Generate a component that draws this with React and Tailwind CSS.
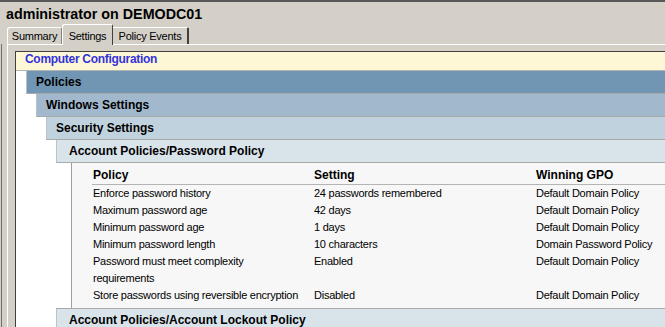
import React from "react";

const rows = [
  ["Enforce password history", "24 passwords remembered", "Default Domain Policy"],
  ["Maximum password age", "42 days", "Default Domain Policy"],
  ["Minimum password age", "1 days", "Default Domain Policy"],
  ["Minimum password length", "10 characters", "Domain Password Policy"],
  [["Password must meet complexity", "requirements"], "Enabled", "Default Domain Policy"],
  ["Store passwords using reversible encryption", "Disabled", "Default Domain Policy"],
];

function Bar({ color, pl, children, extra = "" }) {
  return (
    <div
      className={`h-[23px] flex items-center border-b border-[#a9a9a9] border-l border-l-[#b9c3cb] text-[12px] font-bold text-black ${color} ${pl} ${extra}`}
    >
      <span className="leading-[14px] whitespace-nowrap">{children}</span>
    </div>
  );
}

export default function App() {
  return (
    <div className="w-[665px] h-[327px] overflow-hidden bg-[#d4d0c8] border-t-2 border-[#585858] font-['Liberation_Sans',Arial,sans-serif] text-black">
      {/* Title */}
      <div className="h-[22px] pt-[3px] pl-[6px] text-[14.3px] font-bold leading-[19px] whitespace-nowrap">
        administrator on DEMODC01
      </div>
      {/* Tabs */}
      <div className="h-[20px] flex items-end pl-[7px] text-[11px] tracking-[-0.25px]">
        <div className="w-[55px] h-[17px] border-l border-t border-white border-r border-r-[#808080] rounded-tl-[3px] rounded-tr-[2px] flex items-center justify-center pt-[1px]">
          Summary
        </div>
        <div className="relative z-10 w-[51px] h-[21px] -mb-px bg-[#d4d0c8] border-l border-t border-white border-r border-r-[#404040] rounded-tl-[3px] rounded-tr-[2px] flex items-start justify-center pt-[3px]">
          Settings
        </div>
        <div className="w-[76px] h-[17px] border-t border-white border-r-2 border-r-[#404040] rounded-tr-[2px] flex items-center justify-center pt-[1px]">
          Policy Events
        </div>
      </div>
      {/* Body */}
      <div className="ml-px border-l border-[#707070] h-[300px]">
        <div className="ml-[5px] border-l border-t border-white pt-[6px] pl-[7px] h-full">
          <div className="border-l border-t border-[#404040] bg-white h-full">
            <div className="h-[19px] bg-[#fef7d5] border-b border-[#b4b4b4] pl-[9px] text-[12px] font-bold leading-[14px] tracking-[-0.3px] text-[#3232dc] whitespace-nowrap">
              Computer Configuration
            </div>
            <div className="pl-[10px] bg-white">
              <Bar color="bg-[#7096b3]" pl="pl-[9px]">Policies</Bar>
              <div className="pl-[10px] bg-white">
                <Bar color="bg-[#a2b8cc]" pl="pl-[9px]">Windows Settings</Bar>
                <div className="pl-[10px] bg-white">
                  <Bar color="bg-[#c0d2de]" pl="pl-[9px]">Security Settings</Bar>
                  <div className="pl-[10px] bg-white">
                    <Bar color="bg-[#d9e3ea]" pl="pl-[12px]">Account Policies/Password Policy</Bar>
                    <div className="pl-[15px] bg-white">
                      <div className="border-l border-[#a0a0a0] bg-[#f7f7f7] pt-[4px] pb-[4px] pl-[20px]">
                        <div className="flex h-[18px] border-b border-[#b4b4b4] pl-px text-[12px] font-bold leading-[17px]">
                          <div className="w-[221px]">Policy</div>
                          <div className="w-[222px]">Setting</div>
                          <div className="flex-1">Winning GPO</div>
                        </div>
                        {rows.map((r, i) => (
                          <div key={i} className="flex pl-px text-[11px] tracking-[-0.25px] leading-[17px] whitespace-nowrap">
                            <div className="w-[221px]">
                              {Array.isArray(r[0]) ? (
                                <>
                                  {r[0][0]}
                                  <br />
                                  {r[0][1]}
                                </>
                              ) : (
                                r[0]
                              )}
                            </div>
                            <div className="w-[222px]">{r[1]}</div>
                            <div className="flex-1">{r[2]}</div>
                          </div>
                        ))}
                      </div>
                    </div>
                    <div className="border-t border-[#a9a9a9]">
                      <Bar color="bg-[#d9e3ea]" pl="pl-[12px]">Account Policies/Account Lockout Policy</Bar>
                    </div>
                  </div>
                </div>
              </div>
            </div>
          </div>
        </div>
      </div>
    </div>
  );
}
